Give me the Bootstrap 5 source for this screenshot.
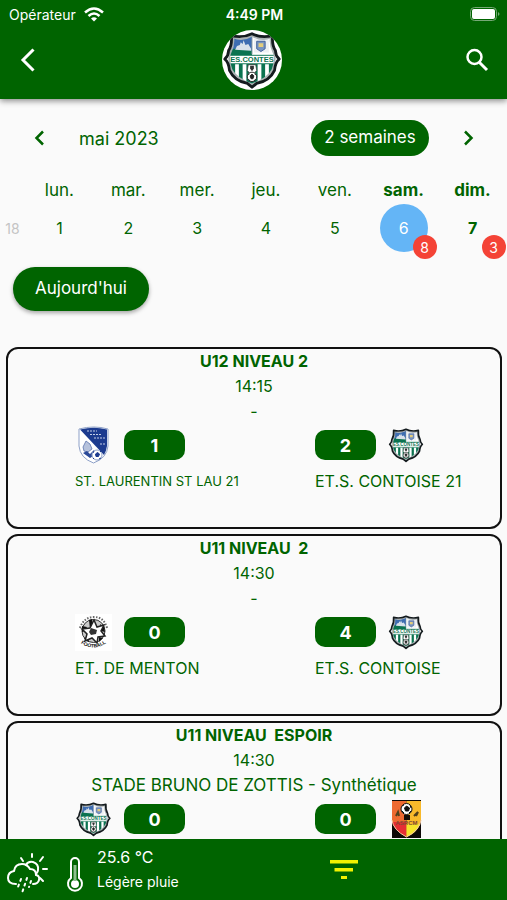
<!DOCTYPE html>
<html lang="fr">
<head>
<meta charset="utf-8">
<meta name="viewport" content="width=device-width, initial-scale=1">
<title>ES Contes – Calendrier</title>
<link rel="stylesheet" href="https://cdn.jsdelivr.net/npm/bootstrap@5.3.0/dist/css/bootstrap.min.css">
<style>
:root { --club: #006400; }
body { font-family: Inter, "Liberation Sans", sans-serif; font-size: 16px; line-height: 25px; color: var(--club); background: #fafafa; }
svg { display: block; flex: none; }
.club-bg { background: var(--club); color: #fff; }
.top-bar { box-shadow: 0 2px 6px rgba(0,0,0,.45); z-index: 2; }
.status { height: 28px; font-size: 14px; padding: 0 7px 0 9px; }
.status > * { flex: 1 1 0; }
.bar { height: 71px; padding: 0 16px 8px; }
.icon-btn { padding: 0; border: 0; line-height: 0; color: inherit; }
.crest-disc { width: 60px; height: 60px; overflow: hidden; }
.scroller { overflow-y: auto; scrollbar-width: none; }
.scroller::-webkit-scrollbar { display: none; }
.month-row { height: 36px; margin-top: 21px; padding: 0 27px; }
.month-name { font-size: 18px; font-weight: 400; line-height: 25px; margin-left: 28px; }
.pill { background: var(--club); color: #fff; border: 0; border-radius: 24px; }
.pill:hover { background: #004f00; color: #fff; }
.pill-span { height: 36px; width: 118px; padding: 0; margin-right: 27px; font-size: 17px; }
.pill-today { height: 44px; width: 136px; padding: 0; margin: 15px 0 0 13px; font-size: 17px; box-shadow: 0 2px 4px rgba(0,0,0,.35); }
.week { width: 100%; table-layout: fixed; text-align: center; margin-top: 20px; }
.week th, .week td { padding: 0; font-weight: 400; vertical-align: middle; }
.week thead th { height: 28px; line-height: 20px; font-size: 17px; }
.week .wk { width: 25px; font-size: 14px; color: #c4c4c4; }
.week thead .we, .week .we { font-weight: 700; }
.day { width: 48px; height: 48px; }
.day.on { background: #64b5f6; color: #fff; font-weight: 400; }
.count { position: absolute; right: -9px; bottom: -7px; width: 24px; height: 24px; background: #f44336; color: #fff; font-size: 14px; font-weight: 400; }
.matches { margin-top: 36px; padding: 0 5px 5px 6px; gap: 5px; }
.match { border: 2px solid #111; border-radius: 12px; min-height: 182px; }
.match h2 { font-size: 16px; font-weight: 700; line-height: 25px; margin: 0; white-space: pre-wrap; }
.venue { font-size: 17px; }
.side-home { padding-left: 67px; }
.side-away { padding-left: 61px; }
.tally { height: 42px; gap: 12px; }
.points { width: 61px; height: 30px; border-radius: 10px; font-size: 18px; font-weight: 700; }
.team { line-height: 30px; white-space: nowrap; }
.team.long { font-size: 13px; }
.bottom-bar { height: 61px; padding: 0 7px; }
.bottom-bar .art { margin-top: 10px; }
.weather { font-size: 16px; line-height: 24px; }
.weather small { font-size: 14px; }
</style>
<script src="https://cdn.jsdelivr.net/npm/bootstrap@5.3.0/dist/js/bootstrap.bundle.min.js"></script>
</head>
<body class="vh-100 d-flex flex-column overflow-hidden">

<svg width="0" height="0" class="position-absolute" aria-hidden="true">
  <defs>
    <clipPath id="shield"><path d="M12 8Q22 12 32 6Q42 12 52 8Q51 16 55 24Q58 31 54 42Q49 52 32 58Q15 52 10 42Q6 31 9 24Q13 16 12 8Z"/></clipPath>
    <symbol id="crest" viewBox="0 0 64 64">
      <g clip-path="url(#shield)">
        <rect width="64" height="64" fill="#fff"/>
        <path d="M6 4H32V25H6Z" fill="#3e6db1"/>
        <path d="M6 22Q20 17 32 22V27H6Z" fill="#0b7350"/>
        <path d="M14 21l2-4 3-1 1-3 2 2 1-4 2 5 3-1 3 5v2z" fill="#d8e1ea"/>
        <path d="M34 9H50V24H34Z" fill="#edf0f3"/>
        <path d="M37 12H46V20L41.500 23L37 20Z" fill="#7894c0" stroke="#405f99"/>
        <path d="M39 14h5v4h-5z" fill="#e4cd7b"/>
        <path d="M32 5V26" stroke="#8b9aa2"/>
        <path d="M4 36H60V62H4Z" fill="#0b7350"/>
        <path d="M14 36h4v20h-4zM22 36h4v24h-4zM38 36h4v24h-4zM46 36h4v20h-4z" fill="#fff"/>
        <path d="M4 27H60V36H4Z" fill="#fff" stroke="#0b7350"/>
        <text x="32" y="34.500" text-anchor="middle" font-family="Liberation Sans, sans-serif" font-size="8" font-weight="700" fill="#0b7350">ES.CONTES</text>
        <path d="M28 37h8l1 6-3 4h-4l-3-4z" fill="#fff" stroke="#333" stroke-width=".8"/><path d="M30 38h4v3l-2 3-2-3z" fill="#333"/>
        <circle cx="32" cy="50" r="5" fill="#fff" stroke="#222"/><path d="M30 49l2-2 2 2-1 3h-2zM28 53l2 1M36 53l-2 1M28 47l1 1M36 47l-1 1" fill="#222" stroke="#222"/>
      </g>
      <path d="M12 8Q22 12 32 6Q42 12 52 8Q51 16 55 24Q58 31 54 42Q49 52 32 58Q15 52 10 42Q6 31 9 24Q13 16 12 8Z" fill="none" stroke="#aab2b4" stroke-width="2"/>
      <path d="M10 6Q22 9 32 4Q42 9 54 6Q53 16 57 22Q57 27 61 31Q57 34 56 43Q51 54 37 57L32 61L27 57Q13 54 8 43Q7 34 3 31Q7 27 7 22Q11 16 10 6Z" fill="none" stroke="#141b1e" stroke-width="3" stroke-linejoin="round"/>
    </symbol>
  </defs>
</svg>

<header class="top-bar club-bg position-relative flex-shrink-0">
  <div class="status d-flex align-items-center">
    <div class="d-flex align-items-center gap-2">
      <span>Opérateur</span>
      <svg width="20" height="15" viewBox="0 0 20 15" fill="none" stroke="#fff" stroke-width="2.500" aria-hidden="true"><path d="M1 5.500Q10-2.500 19 5.500M4.500 9Q10 4 15.500 9"/><path d="M7 11.500Q10 9 13 11.500L10 14.500Z" fill="#fff" stroke="none"/></svg>
    </div>
    <div class="text-center fw-semibold">4:49 PM</div>
    <div class="d-flex justify-content-end">
      <svg width="30" height="14" viewBox="0 0 30 14" aria-hidden="true"><rect x=".5" y=".5" width="26" height="13" rx="4" fill="none" stroke="#76a876"/><rect x="2" y="2" width="23" height="10" rx="2" fill="#fff"/><path d="M28 5q3 2 0 4z" fill="#76a876"/></svg>
    </div>
  </div>
  <div class="bar d-flex align-items-center justify-content-between">
    <button class="btn icon-btn" aria-label="Retour"><svg width="24" height="26" viewBox="0 0 24 26" fill="none" stroke="#fff" stroke-width="3"><path d="M17.500 2.500L7 13L17.500 23.500"/></svg></button>
    <div class="crest-disc rounded-circle bg-white"><svg width="60" height="60"><use href="#crest"/></svg></div>
    <button class="btn icon-btn" aria-label="Rechercher"><svg width="28" height="28" viewBox="0 0 28 28" fill="none" stroke="#fff"><circle cx="11.500" cy="11" r="7" stroke-width="2.500"/><path d="M16 16L24 24" stroke-width="3"/></svg></button>
  </div>
</header>

<main class="scroller flex-grow-1">
  <div class="month-row d-flex align-items-center">
    <button class="btn icon-btn" aria-label="Précédent"><svg width="24" height="24" viewBox="0 0 24 24" fill="none" stroke="currentColor" stroke-width="2.500"><path d="M16 5.500L9.500 12L16 18.500"/></svg></button>
    <h1 class="month-name mb-0">mai 2023</h1>
    <button class="btn pill pill-span ms-auto">2 semaines</button>
    <button class="btn icon-btn" aria-label="Suivant"><svg width="24" height="24" viewBox="0 0 24 24" fill="none" stroke="currentColor" stroke-width="2.500"><path d="M9 5.500L15.500 12L9 18.500"/></svg></button>
  </div>

  <table class="week">
    <thead><tr><th class="wk"></th><th>lun.</th><th>mar.</th><th>mer.</th><th>jeu.</th><th>ven.</th><th class="we">sam.</th><th class="we">dim.</th></tr></thead>
    <tbody><tr>
      <th class="wk">18</th>
      <td>1</td><td>2</td><td>3</td><td>4</td><td>5</td>
      <td><div class="day on rounded-circle position-relative mx-auto d-flex align-items-center justify-content-center">6<span class="count rounded-circle d-flex align-items-center justify-content-center">8</span></div></td>
      <td class="we"><div class="day position-relative mx-auto d-flex align-items-center justify-content-center">7<span class="count rounded-circle d-flex align-items-center justify-content-center">3</span></div></td>
    </tr></tbody>
  </table>

  <button class="btn pill pill-today">Aujourd'hui</button>

  <section class="matches d-flex flex-column">
    <article class="match text-center">
      <h2>U12 NIVEAU 2</h2>
      <div>14:15</div>
      <div>-</div>
      <div class="row g-0 text-start">
        <div class="col-6 side-home">
          <div class="tally d-flex align-items-center">
            <svg width="37" height="38" viewBox="0 0 37 38" aria-hidden="true"><path d="M4 3Q19-1 33 3V20Q32 32 18.500 37Q5 32 4 20Z" fill="#fff" stroke="#8ea1c8"/><path d="M5 3.500Q19 0 32 3.500V20Q31 26 29 29Z" fill="#1c3b8f"/><g stroke="#c4cee6" stroke-dasharray="2 1"><path d="M12 5H22M15 8.500H27M19 12H30M25 18H30"/></g><path d="M8 21l3-6 4 3 2 5-4 3-4-1z" fill="#b6c2dc" stroke="#5c73ad" stroke-width=".8"/><path d="M8 27l4-2 3 3 4-4 1 5-5 3z" fill="#2b4a99"/><circle cx="22" cy="29" r="5" fill="#fff" stroke="#8ea1c8"/><path d="M20.500 28l2-1.500 2 1.500-1 2.500h-2.500zM18 27l1-2M26 32l-2 1M18 32l1 1M25 25l1 1" fill="#1c3b8f" stroke="#1c3b8f"/></svg>
            <span class="points club-bg d-flex align-items-center justify-content-center">1</span>
          </div>
          <div class="team long">ST. LAURENTIN ST LAU 21</div>
        </div>
        <div class="col-6 side-away">
          <div class="tally d-flex align-items-center">
            <span class="points club-bg d-flex align-items-center justify-content-center">2</span>
            <svg width="36" height="36" aria-hidden="true"><use href="#crest"/></svg>
          </div>
          <div class="team">ET.S. CONTOISE 21</div>
        </div>
      </div>
    </article>

    <article class="match text-center">
      <h2>U11 NIVEAU  2</h2>
      <div>14:30</div>
      <div>-</div>
      <div class="row g-0 text-start">
        <div class="col-6 side-home">
          <div class="tally d-flex align-items-center">
            <svg width="37" height="37" viewBox="0 0 37 37" aria-hidden="true"><path d="M0 0H37V37H0Z" fill="#fff"/><circle cx="18.500" cy="17" r="11.500" fill="#ccc" stroke="#333"/><path d="M14 6l3-1 1 8-3 2zM7 12l5 1-2 4-3 1zM25 10l4 3 1 5-4-1zM9 24l4-1 1 5-3-1zM24 23l4 1-4 4z" fill="#111"/><path d="M19 6l3 7 7-2-3 6 4 5-7 1-1 6-5-5-7 3 2-7-5-5 8-1z" fill="#fff" stroke="#222" stroke-width="1.500"/><path d="M16 14l6 2-1 4-5 1-2-3z" fill="#333"/><path d="M5 14Q9 3 19 3Q29 3 32 14" fill="none" stroke="#666" stroke-width="2" stroke-dasharray="1.500 1.500"/><path id="arc" d="M4 28Q18 39 33 28" fill="none"/><text font-family="Liberation Sans, sans-serif" font-size="5" font-weight="700" fill="#111" text-anchor="middle"><textPath href="#arc" startOffset="50%">FOOTBALL</textPath></text></svg>
            <span class="points club-bg d-flex align-items-center justify-content-center">0</span>
          </div>
          <div class="team">ET. DE MENTON</div>
        </div>
        <div class="col-6 side-away">
          <div class="tally d-flex align-items-center">
            <span class="points club-bg d-flex align-items-center justify-content-center">4</span>
            <svg width="36" height="36" aria-hidden="true"><use href="#crest"/></svg>
          </div>
          <div class="team">ET.S. CONTOISE</div>
        </div>
      </div>
    </article>

    <article class="match text-center">
      <h2>U11 NIVEAU  ESPOIR</h2>
      <div>14:30</div>
      <div class="venue">STADE BRUNO DE ZOTTIS - Synthétique</div>
      <div class="row g-0 text-start">
        <div class="col-6 side-home">
          <div class="tally d-flex align-items-center">
            <svg width="37" height="36" aria-hidden="true"><use href="#crest"/></svg>
            <span class="points club-bg d-flex align-items-center justify-content-center">0</span>
          </div>
        </div>
        <div class="col-6 side-away">
          <div class="tally d-flex align-items-center">
            <span class="points club-bg d-flex align-items-center justify-content-center">0</span>
            <svg width="36" height="38" viewBox="0 0 36 38" aria-hidden="true"><path d="M4 0H33V38H4Z" fill="#0d0907"/><path d="M4 1H18.500V37Q5 30 4 20Z" fill="#ee6a32"/><path d="M18.500 1H33V20Q32 30 18.500 37Z" fill="#f8b92b"/><path d="M4 22H18.500V37Q7 31 4 22Z" fill="#e52e34"/><path d="M18.500 24H32Q29 33 18.500 37Z" fill="#f6e42c"/><path d="M4 20Q5 30 18.500 37Q32 30 33 20" fill="none" stroke="#f6c8a0"/><circle cx="18.500" cy="9" r="5.500" fill="#fff" stroke="#111"/><path d="M16.500 8l2-2 3 2-1 3h-3zM14 6l2-1M22 5l1 3M14 11l2 2M23 11l-2 2" fill="#111" stroke="#111"/><path d="M16 15h6v5h-6z" fill="#160d08"/><path d="M8 16l2-4 1 4M26 16l4-4-2 4" stroke="#51401d" stroke-width="2" fill="none"/><text x="18.500" y="25" text-anchor="middle" font-family="Liberation Sans, sans-serif" font-size="6" font-weight="700" fill="#7d4a30">ASRCM</text></svg>
          </div>
        </div>
      </div>
    </article>
  </section>
</main>

<footer class="bottom-bar club-bg flex-shrink-0 d-flex align-items-center">
  <div class="col-6 d-flex align-items-center">
    <svg class="art" width="42" height="44" viewBox="0 0 42 44" fill="none" stroke="#fff" stroke-width="2" stroke-linecap="round" aria-hidden="true"><path d="M9 31Q1 31 1 25Q1 19 7 18Q8 11 15 11Q20 11 23 16Q29 16 29 22Q33 23 32 27Q31 31 26 31"/><path d="M19 12Q21 8 26 9Q32 11 31 17Q31 19 29 21"/><path d="M25 1v3M14 5l2 3M36 4l-3 4M40 16h-4M33 25l3 3"/><path d="M14 26l-3 8M20 25l-5 15M24 28l-2 6" stroke-dasharray="2 4"/></svg>
    <svg class="art ms-3" width="20" height="36" viewBox="0 0 20 36" fill="none" stroke="#fff" stroke-width="2" aria-hidden="true"><path d="M6 5a4 4 0 0 1 8 0V21a7 7 0 1 1-8 0Z"/><circle cx="10" cy="27" r="4" fill="#fff" stroke="none"/><path d="M10 8V24" stroke="#8fbd8f" stroke-width="3"/></svg>
    <div class="weather ms-2 ps-1">25.6 °C<br><small>Légère pluie</small></div>
  </div>
  <div class="col-5 d-flex justify-content-center ps-0 pe-4">
    <button class="btn icon-btn" aria-label="Filtrer"><svg width="28" height="20" viewBox="0 0 28 20" fill="#f2f200"><path d="M0 0H28V3.500H0ZM4.500 8H23V11.500H4.500ZM11 16H17V19H11Z"/></svg></button>
  </div>
</footer>
</body>
</html>
